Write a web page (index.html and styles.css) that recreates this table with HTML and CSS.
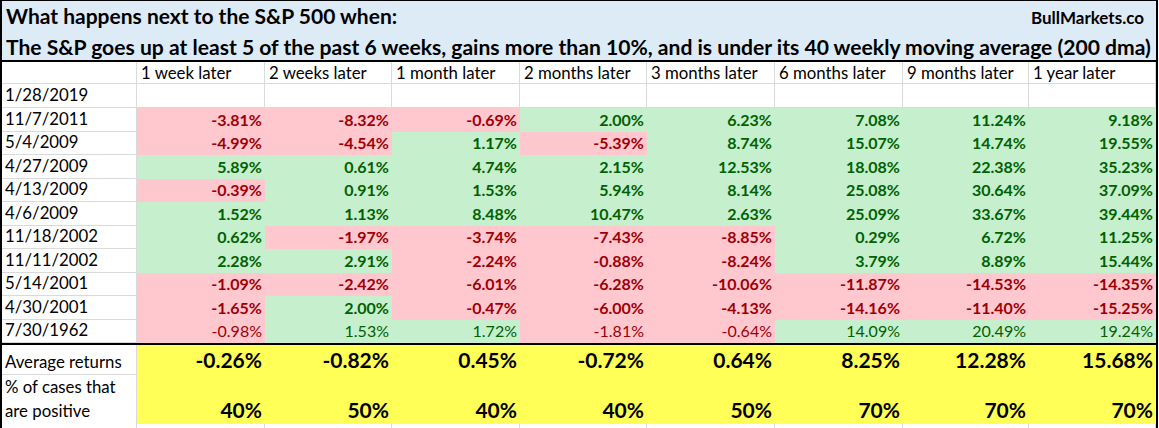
FILE: index.html
```html
<!DOCTYPE html>
<html>
<head>
<meta charset="utf-8">
<link rel="stylesheet" href="styles.css">
</head>
<body>
<div class="sheet">
  <div class="title">
    <div class="t1"><span>What happens next to the S&amp;P 500 when:</span><span class="brand">BullMarkets.co</span></div>
    <div class="t2">The S&amp;P goes up at least 5 of the past 6 weeks, gains more than 10%, and is under its 40 weekly moving average (200 dma)</div>
  </div>
  <div class="row head">
    <div class="c w"></div>
    <div class="c w lab">1 week later</div>
    <div class="c w lab">2 weeks later</div>
    <div class="c w lab">1 month later</div>
    <div class="c w lab">2 months later</div>
    <div class="c w lab">3 months later</div>
    <div class="c w lab">6 months later</div>
    <div class="c w lab">9 months later</div>
    <div class="c w lab">1 year later</div>
  </div>
  <div class="row r24">
    <div class="c w date">1/28/2019</div>
    <div class="c w"></div><div class="c w"></div><div class="c w"></div><div class="c w"></div><div class="c w"></div><div class="c w"></div><div class="c w"></div><div class="c w"></div>
  </div>
  <div class="row r24">
    <div class="c w date">11/7/2011</div>
    <div class="c n">-3.81%</div><div class="c n">-8.32%</div><div class="c n">-0.69%</div><div class="c p">2.00%</div><div class="c p">6.23%</div><div class="c p">7.08%</div><div class="c p">11.24%</div><div class="c p">9.18%</div>
  </div>
  <div class="row r23">
    <div class="c w date">5/4/2009</div>
    <div class="c n">-4.99%</div><div class="c n">-4.54%</div><div class="c p">1.17%</div><div class="c n">-5.39%</div><div class="c p">8.74%</div><div class="c p">15.07%</div><div class="c p">14.74%</div><div class="c p">19.55%</div>
  </div>
  <div class="row r24">
    <div class="c w date">4/27/2009</div>
    <div class="c p">5.89%</div><div class="c p">0.61%</div><div class="c p">4.74%</div><div class="c p">2.15%</div><div class="c p">12.53%</div><div class="c p">18.08%</div><div class="c p">22.38%</div><div class="c p">35.23%</div>
  </div>
  <div class="row r23">
    <div class="c w date">4/13/2009</div>
    <div class="c n">-0.39%</div><div class="c p">0.91%</div><div class="c p">1.53%</div><div class="c p">5.94%</div><div class="c p">8.14%</div><div class="c p">25.08%</div><div class="c p">30.64%</div><div class="c p">37.09%</div>
  </div>
  <div class="row r24">
    <div class="c w date">4/6/2009</div>
    <div class="c p">1.52%</div><div class="c p">1.13%</div><div class="c p">8.48%</div><div class="c p">10.47%</div><div class="c p">2.63%</div><div class="c p">25.09%</div><div class="c p">33.67%</div><div class="c p">39.44%</div>
  </div>
  <div class="row r23">
    <div class="c w date">11/18/2002</div>
    <div class="c p">0.62%</div><div class="c n">-1.97%</div><div class="c n">-3.74%</div><div class="c n">-7.43%</div><div class="c n">-8.85%</div><div class="c p">0.29%</div><div class="c p">6.72%</div><div class="c p">11.25%</div>
  </div>
  <div class="row r24">
    <div class="c w date">11/11/2002</div>
    <div class="c p">2.28%</div><div class="c p">2.91%</div><div class="c n">-2.24%</div><div class="c n">-0.88%</div><div class="c n">-8.24%</div><div class="c p">3.79%</div><div class="c p">8.89%</div><div class="c p">15.44%</div>
  </div>
  <div class="row r23">
    <div class="c w date">5/14/2001</div>
    <div class="c n">-1.09%</div><div class="c n">-2.42%</div><div class="c n">-6.01%</div><div class="c n">-6.28%</div><div class="c n">-10.06%</div><div class="c n">-11.87%</div><div class="c n">-14.53%</div><div class="c n">-14.35%</div>
  </div>
  <div class="row r24">
    <div class="c w date">4/30/2001</div>
    <div class="c n">-1.65%</div><div class="c p">2.00%</div><div class="c n">-0.47%</div><div class="c n">-6.00%</div><div class="c n">-4.13%</div><div class="c n">-14.16%</div><div class="c n">-11.40%</div><div class="c n">-15.25%</div>
  </div>
  <div class="row r23 plain">
    <div class="c w date">7/30/1962</div>
    <div class="c n">-0.98%</div><div class="c p">1.53%</div><div class="c p">1.72%</div><div class="c n">-1.81%</div><div class="c n">-0.64%</div><div class="c p">14.09%</div><div class="c p">20.49%</div><div class="c p">19.24%</div>
  </div>
  <div class="summary">
    <div class="row avg">
      <div class="c w date">Average returns</div>
      <div class="c y">-0.26%</div><div class="c y">-0.82%</div><div class="c y">0.45%</div><div class="c y">-0.72%</div><div class="c y">0.64%</div><div class="c y">8.25%</div><div class="c y">12.28%</div><div class="c y">15.68%</div>
    </div>
    <div class="row pct">
      <div class="c w date wrap">% of cases that<br>are positive</div>
      <div class="c y">40%</div><div class="c y">50%</div><div class="c y">40%</div><div class="c y">40%</div><div class="c y">50%</div><div class="c y">70%</div><div class="c y">70%</div><div class="c y">70%</div>
    </div>
  </div>
  <div class="row tail">
    <div class="c w"></div><div class="c w"></div><div class="c w"></div><div class="c w"></div><div class="c w"></div><div class="c w"></div><div class="c w"></div><div class="c w"></div><div class="c w"></div>
  </div>
</div>
</body>
</html>
```

FILE: styles.css
```css
* { box-sizing: border-box; }
html, body { margin: 0; padding: 0; background: #ffffff; }
body { font-family: Lato, "Open Sans", sans-serif; color: #000; }

.sheet {
  width: 1158px;
  border-left: 2px solid #000;
  border-right: 2px solid #000;
}

.title {
  background: #ddebf7;
  border-top: 1px solid #000;
  border-bottom: 2px solid #000;
  height: 62px;
  padding: 0 4px 0 4px;
  font-weight: 700;
}
.t1 {
  display: flex;
  justify-content: space-between;
  align-items: baseline;
  height: 33px;
  padding-top: 2px;
  font-size: 21px;
  line-height: 25px;
}
.brand { font-size: 17px; padding-right: 8px; }
.t2 { font-size: 21.1px; line-height: 25px; white-space: nowrap; }

.row {
  display: grid;
  grid-template-columns: 135px 128px 127px 128px 127px 128px 128px 126px 127px;
}
.head { height: 22px; }
.r24 { height: 24px; }
.r23 { height: 23px; }

.c {
  display: flex;
  align-items: flex-end;
  justify-content: flex-end;
  padding: 0 3px 3px 4px;
  font-size: 16px;
  line-height: 18px;
  font-weight: 700;
  white-space: nowrap;
}
.w {
  background: #fff;
  border-right: 1px solid #dadada;
  border-bottom: 1px solid #dadada;
  justify-content: flex-start;
  font-weight: 400;
  font-size: 16.8px;
}
.head .c { padding-bottom: 1px; }
.lab { padding-left: 4px; }
.date { padding-left: 3px; }
.n { background: #ffc7ce; color: #9c0006; }
.p { background: #c6efce; color: #006100; }
.plain .c { font-weight: 400; }

.summary {
  border-top: 2px solid #000;
  border-bottom: 2px solid #000;
}
.avg { height: 30px; }
.pct { height: 47px; }
.y {
  background: #ffff57;
  font-size: 21px;
  line-height: 24px;
  padding-bottom: 3px;
}
.wrap { white-space: nowrap; line-height: 24px; padding-bottom: 1px; }
.tail { height: 6px; }
.tail .c { border-bottom: none; }
```
